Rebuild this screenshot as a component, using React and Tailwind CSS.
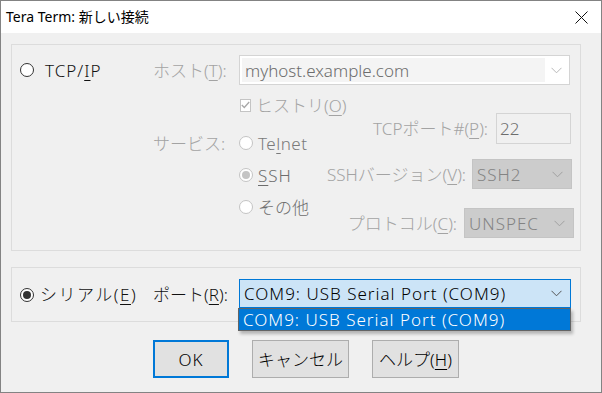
import React from 'react'

const GRAY = 'text-[#a3a3a3]'

function Radio({ checked, disabled }) {
  return (
    <span
      className={
        'w-[14px] h-[14px] rounded-full border bg-white flex items-center justify-center shrink-0 ' +
        (disabled ? 'border-[#c4c4c4]' : 'border-[#333333]')
      }
    >
      {checked && (
        <span className={'w-[8px] h-[8px] rounded-full ' + (disabled ? 'bg-[#c4c4c4]' : 'bg-[#333333]')} />
      )}
    </span>
  )
}

function Chevron({ color = '#a0a0a0' }) {
  return (
    <svg width="11" height="7" viewBox="0 0 11 7" className="shrink-0">
      <polyline points="0.5,0.8 5.5,5.8 10.5,0.8" fill="none" stroke={color} strokeWidth="1" />
    </svg>
  )
}

function U({ children }) {
  return <span className="underline underline-offset-[3px] decoration-1">{children}</span>
}

export default function App() {
  return (
    <div className="w-[602px] h-[393px] border border-[#838383] bg-[#f0f0f0] flex flex-col overflow-hidden font-['Noto_Sans','Noto_Sans_CJK_JP',sans-serif] font-light text-[17px] leading-none text-[#111]">
      {/* title bar */}
      <div className="h-[32px] bg-white flex items-center justify-between pl-[5px] pr-[13px] shrink-0">
        <span className="text-[14px] font-normal text-black">Tera Term: 新しい接続</span>
        <svg width="13" height="13" viewBox="0 0 13 13">
          <path d="M0.5 0.5 L12.5 12.5 M12.5 0.5 L0.5 12.5" stroke="#111" strokeWidth="1" />
        </svg>
      </div>

      <div className="flex-1 pl-[10px]">
        {/* TCP/IP group */}
        <div className="mt-[11px] w-[570px] h-[207px] border border-[#dcdcdc]">
          <div className="mt-[10px] h-[30px] flex items-center">
            <div className="w-[141px] pl-[8px] flex items-center gap-[11px]">
              <Radio />
              <span className="tracking-[1px]">TCP/<U>I</U>P</span>
            </div>
            <div className={'w-[86px] whitespace-nowrap ' + GRAY}>ホスト(<U>T</U>):</div>
            <div className="w-[331px] h-[30px] border border-[#d4d4d4] bg-white p-[2px] flex">
              <div className="flex-1 bg-[#f4f4f4] flex items-center pl-[3px] text-[#6d6d6d]">myhost.example.com</div>
              <div className="w-[22px] flex items-center justify-center">
                <Chevron color="#b8b8b8" />
              </div>
            </div>
          </div>

          <div className="flex">
            <div className="ml-[141px] w-[86px] pt-[48px]">
              <div className={'h-[20px] flex items-center whitespace-nowrap ' + GRAY}>サービス:</div>
            </div>
            <div className="w-[70px] flex flex-col whitespace-nowrap">
              <div className="mt-[10px] h-[20px] flex items-center gap-[5px] pl-[1px]">
                <span className="w-[13px] h-[13px] border border-[#c4c4c4] bg-white flex items-center justify-center">
                  <svg width="9" height="8" viewBox="0 0 9 8">
                    <polyline points="0.8,4 3.3,6.5 8.2,1" fill="none" stroke="#a8a8a8" strokeWidth="1.3" />
                  </svg>
                </span>
                <span className={GRAY}>ヒストリ(<U>O</U>)</span>
              </div>
              <div className="mt-[18px] h-[20px] flex items-center gap-[5px]">
                <Radio disabled />
                <span className="text-[#7a7a7a] tracking-[0.5px]">Te<U>l</U>net</span>
              </div>
              <div className="mt-[12px] h-[20px] flex items-center gap-[5px]">
                <Radio disabled checked />
                <span className="text-[#6d6d6d] tracking-[1px]"><U>S</U>SH</span>
              </div>
              <div className="mt-[12px] h-[20px] flex items-center gap-[5px]">
                <Radio disabled />
                <span className="text-[#6d6d6d]">その他</span>
              </div>
            </div>
            <div className="flex-1 flex flex-col items-end whitespace-nowrap">
              <div className="mt-[28px] mr-[9px] flex items-center gap-[8px]">
                <span className={GRAY}>TCPポート#(<U>P</U>):</span>
                <div className="w-[75px] h-[31px] border border-[#d4d4d4] bg-[#f0f0f0] flex items-center pl-[3px] text-[#6d6d6d]">22</div>
              </div>
              <div className="mt-[15px] mr-[8px] flex items-center gap-[6px]">
                <span className={GRAY}>SSHバージョン(<U>V</U>):</span>
                <div className="w-[100px] h-[30px] border border-[#c4c4c4] bg-[#cccccc] flex items-center justify-between pl-[4px] pr-[8px] text-[#838383] tracking-[1px]">
                  SSH2
                  <Chevron />
                </div>
              </div>
              <div className="mt-[19px] mr-[6px] flex items-center gap-[7px]">
                <span className={GRAY}>プロトコル(<U>C</U>):</span>
                <div className="w-[110px] h-[30px] border border-[#c4c4c4] bg-[#cccccc] flex items-center justify-between pl-[4px] pr-[8px] text-[#838383] tracking-[1px]">
                  UNSPEC
                  <Chevron />
                </div>
              </div>
            </div>
          </div>
        </div>

        {/* Serial group */}
        <div className="mt-[16px] w-[570px] h-[55px] border border-[#dcdcdc] flex items-center">
          <div className="w-[141px] pl-[8px] flex items-center gap-[6px] whitespace-nowrap">
            <Radio checked />
            <span className="tracking-[1.5px]">シリアル(<U>E</U>)</span>
          </div>
          <div className="w-[86px] whitespace-nowrap">ポート(<U>R</U>):</div>
          <div className="relative w-[332px] h-[29px] -mt-[2px]">
            <div className="h-full border border-[#0078d7] bg-[#cce4f7] flex items-center justify-between pl-[4px] pr-[8px] text-black whitespace-nowrap">
              <span className="tracking-[1px]">COM9: USB Serial Port (COM9)</span>
              <Chevron color="#555555" />
            </div>
            <div className="absolute left-[-1px] top-full w-[333px] h-[23px] border border-[#646464] bg-[#0078d7] text-white flex items-center pl-[4px] whitespace-nowrap shadow-[2px_3px_3px_rgba(0,0,0,0.25)] z-10">
              <span className="tracking-[1px]">COM9: USB Serial Port (COM9)</span>
            </div>
          </div>
        </div>

        {/* buttons */}
        <div className="mt-[18px] ml-[142px] flex gap-[23px]">
          <button className="w-[76px] h-[38px] border-2 border-[#0078d7] bg-[#e1e1e1] text-black tracking-[1px]">OK</button>
          <button className="w-[97px] h-[38px] border border-[#adadad] bg-[#e1e1e1] text-black">キャンセル</button>
          <button className="w-[87px] h-[38px] border border-[#adadad] bg-[#e1e1e1] text-black">ヘルプ(<U>H</U>)</button>
        </div>
      </div>
    </div>
  )
}
